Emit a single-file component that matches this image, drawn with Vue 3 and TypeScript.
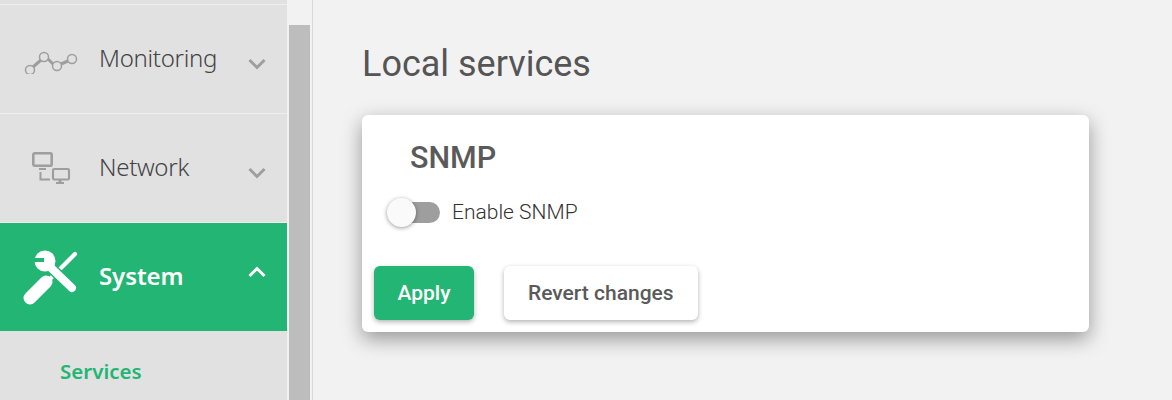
<script setup lang="ts">
interface NavItem { label: string; icon: string; active?: boolean }
const items: NavItem[] = [
  { label: 'Monitoring', icon: 'monitoring' },
  { label: 'Network', icon: 'network' },
  { label: 'System', icon: 'system', active: true },
]
</script>

<template>
  <div class="page">
    <aside class="sidebar">
      <div class="stub"></div>
      <div v-for="item in items" :key="item.label" class="nav-row" :class="{ active: item.active }">
        <span class="nav-icon">
          <svg v-if="item.icon === 'monitoring'" width="56" height="30" viewBox="0 0 56 30" fill="none">
            <path d="M10 23 L18 16 M25 15 L30 20 M38 20 L45 17" stroke="#9e9e9e" stroke-width="3" />
            <circle cx="7" cy="26" r="4.5" stroke="#9e9e9e" stroke-width="1.5" />
            <circle cx="21" cy="13" r="4.5" stroke="#9e9e9e" stroke-width="1.5" />
            <circle cx="34" cy="22" r="4.5" stroke="#9e9e9e" stroke-width="1.5" />
            <circle cx="49" cy="15" r="4.5" stroke="#9e9e9e" stroke-width="1.5" />
          </svg>
          <svg v-else-if="item.icon === 'network'" width="40" height="34" viewBox="0 0 40 34" fill="none">
            <rect x="2.3" y="2.3" width="18.4" height="12.4" rx="1.5" stroke="#9e9e9e" stroke-width="2.6" />
            <path d="M8 18 H15" stroke="#9e9e9e" stroke-width="2" />
            <path d="M9.5 21 V28.5 H19" stroke="#9e9e9e" stroke-width="2" />
            <rect x="22" y="18" width="16" height="10.5" rx="1.2" stroke="#9e9e9e" stroke-width="2.2" />
            <path d="M25 32 H33" stroke="#9e9e9e" stroke-width="2" />
            <path d="M29 29 V32" stroke="#9e9e9e" stroke-width="3" />
          </svg>
          <svg v-else width="56" height="56" viewBox="0 0 56 56" fill="none">
            <path d="M26 31 L52 5" stroke="#fff" stroke-width="4.2" stroke-linecap="round" />
            <path d="M7 49 L23 33" stroke="#fff" stroke-width="13" stroke-linecap="round" />
            <path d="M24 15 L49 39" stroke="#22b573" stroke-width="11" />
            <path d="M24 15 L49 39" stroke="#fff" stroke-width="8" stroke-linecap="round" />
            <circle cx="22" cy="12" r="10.5" fill="#fff" />
            <rect x="10" y="9" width="11" height="4" fill="#22b573" />
          </svg>
        </span>
        <span class="nav-label">{{ item.label }}</span>
        <svg class="chevron" width="18" height="12" viewBox="0 0 18 12" fill="none">
          <path :d="item.active ? 'M1.5 10 L9 2.5 L16.5 10' : 'M1.5 2 L9 9.5 L16.5 2'" :stroke="item.active ? '#fff' : '#9e9e9e'" stroke-width="3" />
        </svg>
      </div>
      <div class="sub-item">Services</div>
    </aside>
    <div class="scroll-track"><div class="scroll-thumb"></div></div>
    <main class="main">
      <h1 class="title">Local services</h1>
      <section class="card">
        <h2 class="card-title">SNMP</h2>
        <div class="toggle-row">
          <span class="toggle"><span class="knob"></span></span>
          <span class="toggle-label">Enable SNMP</span>
        </div>
        <div class="actions">
          <button class="btn primary" type="button">Apply</button>
          <button class="btn" type="button">Revert changes</button>
        </div>
      </section>
    </main>
  </div>
</template>

<style>
html, body { margin: 0; background: #f2f2f2; }
</style>

<style scoped>
.page {
  display: flex;
  width: 1172px;
  height: 400px;
  overflow: hidden;
  background: #f2f2f2;
}
.sidebar {
  flex: 0 0 287px;
  background: #e1e1e1;
  font-family: "Noto Sans", sans-serif;
}
.stub {
  height: 4px;
  border-bottom: 1px solid #eeeeee;
}
.nav-row {
  display: flex;
  align-items: center;
  height: 108px;
  border-bottom: 1px solid #eeeeee;
  color: #444;
}
.nav-row.active {
  background: #22b573;
  color: #fff;
  border-bottom: none;
}
.nav-icon {
  flex: 0 0 99px;
  display: flex;
  justify-content: center;
  padding-left: 3px;
  box-sizing: border-box;
}
.nav-label {
  flex: 1;
  font-size: 24px;
  font-weight: 300;
  letter-spacing: -0.3px;
  margin-top: -4px;
}
.active .nav-label { font-weight: 600; letter-spacing: -0.1px; }
.chevron { margin: 10px 21px 0 0; }
.active .chevron { margin-top: -10px; }
.sub-item {
  padding: 26px 0 0 60px;
  font-size: 20.5px;
  font-weight: 600;
  color: #22b573;
}
.scroll-track {
  flex: 0 0 25px;
  background: #f2f2f2;
  border-left: 2px solid #f2f2f2;
  box-sizing: border-box;
  padding: 25px 2px 0 0;
}
.scroll-thumb {
  height: 100%;
  background: #bdbdbd;
}
.main {
  flex: 1;
  border-left: 1px solid #d8d8d8;
  padding: 0 83px 0 49px;
  font-family: Roboto, sans-serif;
}
.title {
  margin: 42px 0 0;
  font-size: 36px;
  line-height: 44px;
  font-weight: 400;
  color: #555;
}
.card {
  margin-top: 29px;
  height: 217px;
  background: #fff;
  border-radius: 6px;
  box-shadow: 0 7px 20px rgba(0, 0, 0, 0.38);
  padding: 23px 12px 12px;
  box-sizing: border-box;
  display: flex;
  flex-direction: column;
}
.card-title {
  margin: 0 0 0 36px;
  font-size: 30.5px;
  line-height: 40px;
  font-weight: 500;
  color: #5a5a5a;
}
.toggle-row {
  display: flex;
  align-items: center;
  margin: 19px 0 0 13px;
  height: 30px;
}
.toggle {
  width: 53px;
  height: 21px;
  position: relative;
  display: block;
}
.toggle::before {
  content: "";
  position: absolute;
  left: 11px;
  right: 0;
  top: 0;
  bottom: 0;
  background: #9e9e9e;
  border-radius: 11px;
}
.knob {
  position: absolute;
  left: 0;
  top: -4px;
  width: 29px;
  height: 29px;
  border-radius: 50%;
  background: #fafafa;
  box-shadow: 0 1px 4px rgba(0, 0, 0, 0.4);
}
.toggle-label {
  margin-left: 12px;
  font-size: 21px;
  font-weight: 300;
  color: #333;
}
.actions {
  display: flex;
  gap: 30px;
  margin-top: auto;
}
.btn {
  height: 54px;
  padding: 0 24px;
  border: none;
  border-radius: 6px;
  background: #fff;
  color: #5a5a5a;
  font-family: Roboto, sans-serif;
  font-size: 21px;
  font-weight: 500;
  box-shadow: 0 2px 5px rgba(0, 0, 0, 0.3);
}
.btn.primary {
  background: #22b573;
  color: #fff;
  width: 100px;
  padding: 0;
}
</style>
